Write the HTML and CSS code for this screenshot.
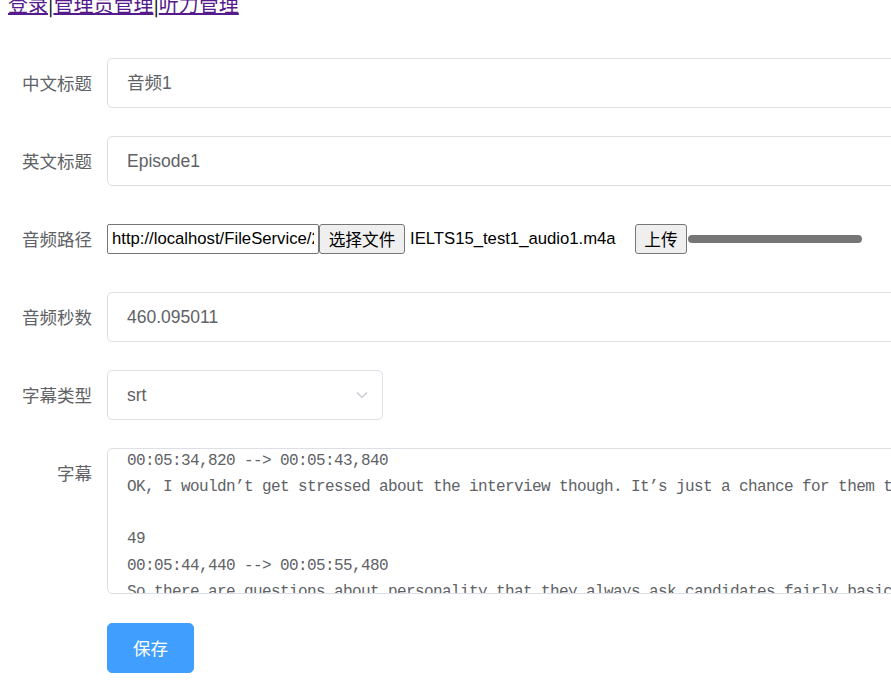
FILE: index.html
```html
<!DOCTYPE html>
<html lang="zh-CN">
<head>
<meta charset="utf-8">
<title>听力管理</title>
<link rel="stylesheet" href="styles.css">
</head>
<body>
<nav class="nav"><a href="#login">登录</a>|<a href="#admin">管理员管理</a>|<a href="#listen">听力管理</a></nav>
<form class="form">
  <div class="item">
    <label class="label">中文标题</label>
    <div class="content"><div class="input">音频1</div></div>
  </div>
  <div class="item">
    <label class="label">英文标题</label>
    <div class="content"><div class="input">Episode1</div></div>
  </div>
  <div class="item">
    <label class="label">音频路径</label>
    <div class="content row">
      <div class="native-input"><span class="native-value">http://localhost/FileService/2</span></div><span class="native-btn pick">选择文件</span><span class="filename">IELTS15_test1_audio1.m4a</span><span class="native-btn upload">上传</span><span class="progress"></span>
    </div>
  </div>
  <div class="item">
    <label class="label">音频秒数</label>
    <div class="content"><div class="input">460.095011</div></div>
  </div>
  <div class="item">
    <label class="label">字幕类型</label>
    <div class="content">
      <div class="select"><span>srt</span>
        <svg class="arrow" width="12" height="8" viewBox="0 0 12 8"><path d="M1 1.5 L6 6.5 L11 1.5" fill="none" stroke="#c0c4cc" stroke-width="1.1"/></svg>
      </div>
    </div>
  </div>
  <div class="item">
    <label class="label">字幕</label>
    <div class="content">
      <div class="textarea"><pre class="srt">00:05:34,820 --> 00:05:43,840
OK, I wouldn’t get stressed about the interview though. It’s just a chance for them to get to know you.

49
00:05:44,440 --> 00:05:55,480
So there are questions about personality that they always ask candidates fairly basic questions.</pre></div>
    </div>
  </div>
  <div class="item">
    <div class="label"></div>
    <div class="content"><span class="btn-primary">保存</span></div>
  </div>
</form>
</body>
</html>
```

FILE: styles.css
```css
html {
  overflow: hidden;
}
body {
  margin: 0 0 0 8px;
  background: #fff;
}
.nav {
  margin-top: -11px;
  font-family: "Noto Sans CJK SC", sans-serif;
  font-size: 20px;
  line-height: 29px;
  color: #000;
  white-space: nowrap;
}
.nav a {
  color: #551a8b;
  text-decoration: underline;
}
.form {
  margin-top: 40px;
  font-family: "Liberation Sans", "Noto Sans CJK SC", sans-serif;
  font-size: 17.5px;
  color: #606266;
}
.item {
  display: flex;
  margin-bottom: 28px;
}
.label {
  flex: 0 0 99px;
  box-sizing: border-box;
  padding-right: 15px;
  text-align: right;
  line-height: 50px;
  font-family: "Noto Sans CJK SC", sans-serif;
  font-size: 17.5px;
  color: #606266;
}
.content {
  flex: 1;
  min-width: 0;
}
.input {
  box-sizing: border-box;
  width: 900px;
  height: 50px;
  line-height: 48px;
  border: 1px solid #dcdfe6;
  border-radius: 5px;
  padding: 0 19px;
  color: #606266;
  white-space: nowrap;
}
.row {
  display: flex;
  align-items: center;
  height: 50px;
  font-family: "Liberation Sans", "Noto Sans CJK SC", sans-serif;
  font-size: 16.7px;
  color: #000;
  white-space: nowrap;
}
.native-input {
  box-sizing: border-box;
  width: 212px;
  height: 30px;
  line-height: 28px;
  border: 1px solid #767676;
  border-radius: 2px;
  padding: 0 4px;
  overflow: hidden;
}
.native-value {
  display: block;
  width: 202px;
  overflow: hidden;
}
.native-btn {
  box-sizing: border-box;
  height: 30px;
  line-height: 28px;
  border: 1px solid #767676;
  border-radius: 3px;
  background: #efefef;
  font-family: "Noto Sans CJK SC", sans-serif;
  font-size: 16.7px;
  color: #000;
  text-align: center;
}
.pick {
  width: 86px;
}
.filename {
  margin-left: 5px;
  width: 225px;
}
.upload {
  width: 52px;
}
.progress {
  width: 174px;
  height: 8px;
  margin-left: 1px;
  border-radius: 4px;
  background: #767676;
}
.select {
  box-sizing: border-box;
  width: 276px;
  height: 50px;
  border: 1px solid #dcdfe6;
  border-radius: 5px;
  padding: 0 14px 0 19px;
  display: flex;
  align-items: center;
  justify-content: space-between;
  color: #606266;
}
.textarea {
  box-sizing: border-box;
  width: 900px;
  height: 146px;
  border: 1px solid #dcdfe6;
  border-radius: 5px;
  padding: 0 19px;
  overflow: hidden;
}
.srt {
  margin: -1.5px 0 0;
  font-family: "Liberation Mono", monospace;
  font-size: 16px;
  letter-spacing: -0.6px;
  line-height: 26.25px;
  color: #606266;
  white-space: pre;
}
.btn-primary {
  display: inline-block;
  box-sizing: border-box;
  width: 87px;
  height: 50px;
  line-height: 48px;
  border: 1px solid #409eff;
  border-radius: 5px;
  background: #409eff;
  color: #fff;
  text-align: center;
  font-family: "Noto Sans CJK SC", sans-serif;
  font-size: 17.5px;
  margin-top: 1px;
}
```
